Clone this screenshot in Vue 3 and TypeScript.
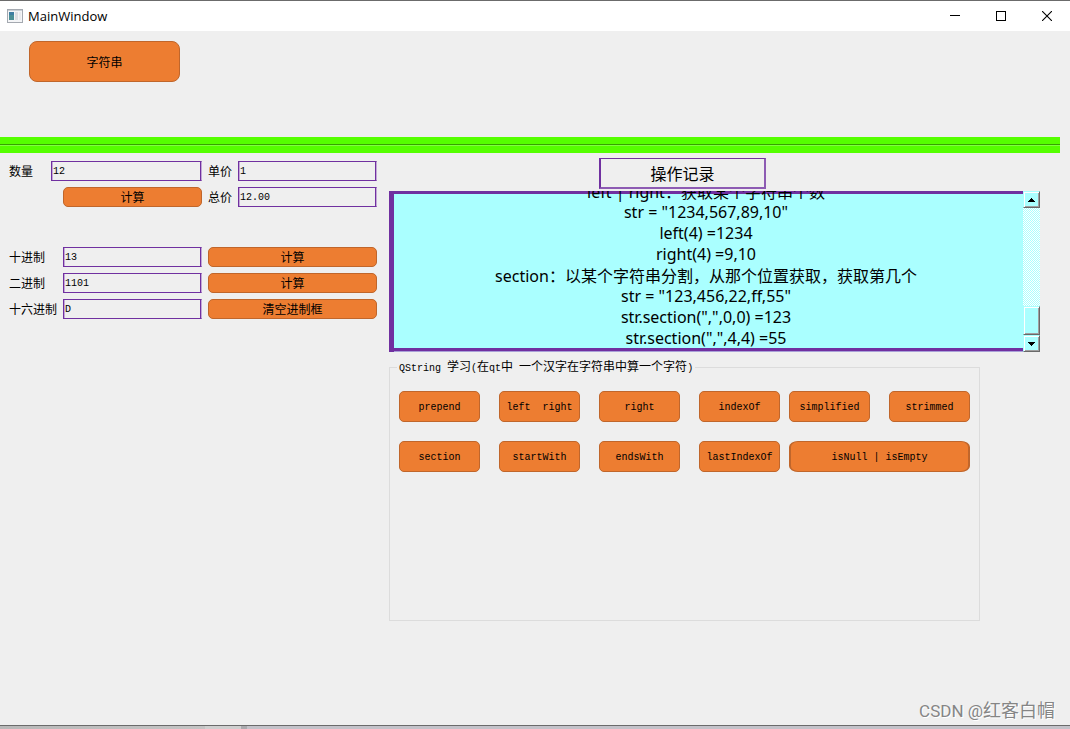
<script setup lang="ts">
import { nextTick, onMounted, ref } from 'vue'

interface Run {
  text: string
  cjk: boolean
}

const quantity = ref('12')
const price = ref('1')
const total = ref('12.00')
const decimal = ref('13')
const binary = ref('1101')
const hex = ref('D')

const lines = ref<string[]>([
  'left | right：获取某个字符串个数',
  'str = "1234,567,89,10"',
  'left(4) =1234',
  'right(4) =9,10',
  'section：以某个字符串分割，从那个位置获取，获取第几个',
  'str = "123,456,22,ff,55"',
  'str.section(",",0,0) =123',
  'str.section(",",4,4) =55',
])

const groupTitle = 'QString 学习(在qt中 一个汉字在字符串中算一个字符)'
const mainActions = ['prepend', 'left  right', 'right', 'indexOf', 'section', 'startWith', 'endsWith', 'lastIndexOf']
const sideActions = ['simplified', 'strimmed', 'isNull | isEmpty']

const log = ref<HTMLElement | null>(null)

// Latin and Chinese runs use different font sizes
function runs(text: string): Run[] {
  const parts = text.match(/[\u2e80-\uffef]+|[^\u2e80-\uffef]+/g) ?? []
  return parts.map((part) => ({ text: part, cjk: /[\u2e80-\uffef]/.test(part) }))
}

function computeTotal(): void {
  total.value = (Number(quantity.value) * Number(price.value)).toFixed(2)
}

function fromDecimal(): void {
  const n = parseInt(decimal.value, 10)
  binary.value = n.toString(2)
  hex.value = n.toString(16).toUpperCase()
}

function fromBinary(): void {
  const n = parseInt(binary.value, 2)
  decimal.value = n.toString(10)
  hex.value = n.toString(16).toUpperCase()
}

function clearBases(): void {
  decimal.value = ''
  binary.value = ''
  hex.value = ''
}

function scrollLog(step: number): void {
  if (log.value) log.value.scrollTop += step
}

function scrollToEnd(): void {
  if (log.value) log.value.scrollTop = log.value.scrollHeight
}

async function record(action: string): Promise<void> {
  lines.value.push(action)
  await nextTick()
  scrollToEnd()
}

onMounted(scrollToEnd)
</script>

<template>
  <div class="window">
    <header class="titlebar">
      <svg class="app-icon" width="16" height="14" viewBox="0 0 16 14" aria-hidden="true">
        <rect x="0.5" y="0.5" width="15" height="13" fill="#f4f5f7" stroke="#a4a9b0" />
        <rect x="1" y="1" width="14" height="1" fill="#c9d0d6" />
        <rect x="2" y="3" width="5" height="8" fill="#4b8f96" />
        <rect x="2" y="3" width="5" height="3" fill="#3e7ea2" />
        <rect x="8" y="3" width="3" height="8" fill="#dcdee2" />
        <rect x="12" y="3" width="2" height="8" fill="#e9ebee" />
      </svg>
      <h1 class="title">MainWindow</h1>
      <div class="controls">
        <button type="button" aria-label="Minimize">
          <svg width="10" height="10" viewBox="0 0 10 10"><path d="M0 4.5H10" stroke="#000" /></svg>
        </button>
        <button type="button" aria-label="Maximize">
          <svg width="10" height="10" viewBox="0 0 10 10"><rect x="0.5" y="0.5" width="9" height="9" fill="none" stroke="#000" /></svg>
        </button>
        <button type="button" aria-label="Close">
          <svg width="10" height="10" viewBox="0 0 10 10"><path d="M0 0L10 10M10 0L0 10" stroke="#000" stroke-width="1.1" /></svg>
        </button>
      </div>
    </header>

    <nav class="toolbar">
      <button type="button" class="btn btn-large">字符串</button>
    </nav>
    <hr class="divider" />

    <main class="body">
      <section class="left">
        <div class="row">
          <div class="half wide">
            <label for="quantity" class="short">数量</label>
            <input id="quantity" v-model="quantity" type="text" />
          </div>
          <div class="half">
            <label for="price" class="mini">单价</label>
            <input id="price" v-model="price" type="text" />
          </div>
        </div>
        <div class="row">
          <div class="half wide indent">
            <button type="button" class="btn" @click="computeTotal">计算</button>
          </div>
          <div class="half">
            <label for="total" class="mini">总价</label>
            <input id="total" v-model="total" type="text" />
          </div>
        </div>
        <div class="row spaced">
          <div class="half wide">
            <label for="decimal">十进制</label>
            <input id="decimal" v-model="decimal" type="text" />
          </div>
          <div class="half">
            <button type="button" class="btn" @click="fromDecimal">计算</button>
          </div>
        </div>
        <div class="row">
          <div class="half wide">
            <label for="binary">二进制</label>
            <input id="binary" v-model="binary" type="text" />
          </div>
          <div class="half">
            <button type="button" class="btn" @click="fromBinary">计算</button>
          </div>
        </div>
        <div class="row">
          <div class="half wide">
            <label for="hex">十六进制</label>
            <input id="hex" v-model="hex" type="text" />
          </div>
          <div class="half">
            <button type="button" class="btn" @click="clearBases">清空进制框</button>
          </div>
        </div>
      </section>

      <section class="right">
        <h2 class="log-title">操作记录</h2>
        <div class="log-box">
          <div ref="log" class="log">
            <p v-for="(line, i) in lines" :key="i">
              <span v-for="(run, j) in runs(line)" :key="j" :class="{ cjk: run.cjk }">{{ run.text }}</span>
            </p>
          </div>
          <div class="scrollbar">
            <button type="button" class="bevel" aria-label="Scroll up" @click="scrollLog(-21)">
              <svg width="7" height="4" viewBox="0 0 7 4" shape-rendering="crispEdges"><path d="M3 0h1v1h1v1h1v1h1v1H0V3h1V2h1V1h1z" /></svg>
            </button>
            <svg class="track" width="17" height="98" shape-rendering="crispEdges" aria-hidden="true">
              <defs>
                <pattern id="dither" width="2" height="2" patternUnits="userSpaceOnUse">
                  <rect width="2" height="2" fill="#aaffff" />
                  <rect width="1" height="1" fill="#ffffff" />
                  <rect x="1" y="1" width="1" height="1" fill="#ffffff" />
                </pattern>
              </defs>
              <rect width="100%" height="100%" fill="url(#dither)" />
            </svg>
            <div class="bevel thumb"></div>
            <button type="button" class="bevel" aria-label="Scroll down" @click="scrollLog(21)">
              <svg width="7" height="4" viewBox="0 0 7 4" shape-rendering="crispEdges"><path d="M0 0h7v1H6v1H5v1H4v1H3V3H2V2H1V1H0z" /></svg>
            </button>
          </div>
        </div>

        <fieldset class="group">
          <legend>
            <span v-for="(run, i) in runs(groupTitle)" :key="i" :class="{ latin: !run.cjk }">{{ run.text }}</span>
          </legend>
          <div class="actions">
            <div class="grid main-grid">
              <button v-for="name in mainActions" :key="name" type="button" class="btn code" @click="record(name)">{{ name }}</button>
            </div>
            <div class="grid side-grid">
              <button v-for="name in sideActions" :key="name" type="button" class="btn code" :class="{ double: name.includes('|') }" @click="record(name)">{{ name }}</button>
            </div>
          </div>
        </fieldset>
      </section>
    </main>
    <div class="watermark"><span>CSDN @</span><span class="cjk">红客白帽</span></div>
  </div>
  <div class="desktop-edge"></div>
</template>

<style>
body {
  background: #c6c6c8;
}

#app {
  display: flex;
  flex-direction: column;
  min-height: 100vh;
}
</style>

<style scoped>
.window {
  position: relative;
  flex: 1;
  display: flex;
  flex-direction: column;
  box-sizing: border-box;
  border-top: 1px solid #6b6b6b;
  border-bottom: 1px solid #6b6b6b;
  background: #efefef;
  color: #000;
  font: 12px/16px "Noto Sans CJK SC", sans-serif;
}

.desktop-edge {
  height: 3px;
  background: linear-gradient(90deg, #b8b8b8 0, #c4c4c4 205px, #cfcfcf 205px, #cfcfcf 241px, #aaaaae 241px, #aaaaae 247px, #c3c2c9 247px);
}

button,
input {
  box-sizing: border-box;
  margin: 0;
  font: inherit;
  color: inherit;
}

.titlebar {
  display: flex;
  align-items: center;
  height: 30px;
  padding-left: 7px;
  background: #fff;
}

.title {
  flex: 1;
  margin: 0 0 0 5px;
  font: 400 13px/16px "Open Sans", sans-serif;
}

.controls {
  display: flex;
}

.controls button {
  display: flex;
  align-items: center;
  justify-content: center;
  width: 46px;
  height: 30px;
  padding: 0;
  border: 0;
  background: none;
}

.toolbar {
  box-sizing: border-box;
  height: 106px;
  padding: 10px 29px 0;
}

.btn {
  flex: 1;
  min-width: 0;
  height: 20px;
  padding: 0;
  border: 1px solid #c0662b;
  border-radius: 5px;
  background: #ed7d31;
  text-align: center;
  white-space: pre;
}

.btn-large {
  width: 151px;
  height: 41px;
  border-radius: 8px;
}

.divider {
  box-sizing: border-box;
  height: 16px;
  margin: 0 10px 0 0;
  border: 0;
  background: linear-gradient(#55ff00 7px, #36a200 7px, #36a200 8px, #80ff40 8px, #80ff40 9px, #55ff00 9px);
}

.body {
  flex: 1;
  display: flex;
  align-items: flex-start;
  gap: 12px;
  padding: 5px 30px 20px 9px;
}

.left {
  display: flex;
  flex-direction: column;
  gap: 6px;
  width: 368px;
  padding-top: 3px;
}

.row {
  display: flex;
  gap: 6px;
}

.spaced {
  margin-top: 34px;
}

.half {
  display: flex;
  align-items: center;
  width: 169px;
}

.wide {
  width: 193px;
}

.indent {
  box-sizing: border-box;
  padding-left: 54px;
}

label {
  width: 54px;
  white-space: nowrap;
}

.short {
  width: 42px;
}

.mini {
  width: 30px;
}

input {
  flex: 1;
  min-width: 0;
  height: 20px;
  padding: 0 1px;
  border: 1px solid #7030a0;
  border-right-color: #c3a8d6;
  border-radius: 0;
  background: transparent;
  box-shadow: inset 1px 0 #c3a8d6, inset -1px 0 #7030a0;
  font-family: "Liberation Mono", monospace;
  font-size: 10px;
  outline: none;
}

.right {
  flex: 1;
  min-width: 0;
}

.log-title {
  box-sizing: border-box;
  width: 167px;
  height: 31px;
  margin: 0 0 2px 210px;
  border: 2px solid #7030a0;
  border-top-width: 1px;
  border-right-color: #8d5bb3;
  border-bottom-color: #8d5bb3;
  font: 400 16px/28px "Noto Sans CJK SC", sans-serif;
  text-align: center;
}

.log-box {
  display: flex;
  height: 161px;
}

.log {
  flex: 1;
  min-width: 0;
  box-sizing: border-box;
  overflow: hidden;
  padding-bottom: 3px;
  background: #aaffff;
  box-shadow: inset 5px 0 #7030a0, inset 0 3px #7030a0, inset 0 -1px #a9a0d8, inset 0 -4px #7030a0;
  font: 16px/21px "Noto Sans", "Noto Sans CJK SC", sans-serif;
  text-align: center;
}

.log p {
  height: 21px;
  margin: 0;
  white-space: pre;
}

.log .cjk {
  font-family: "Noto Sans CJK SC", sans-serif;
}

.scrollbar {
  display: flex;
  flex-direction: column;
  width: 17px;
}

.bevel {
  display: flex;
  align-items: center;
  justify-content: center;
  box-sizing: border-box;
  width: 17px;
  height: 17px;
  padding: 0;
  border: 1px solid #aaffff;
  border-right-color: #696969;
  border-bottom-color: #696969;
  background: #aaffff;
  box-shadow: inset 1px 1px #fff, inset -1px -1px #a0a0a0;
}

.thumb {
  height: 29px;
}

.track {
  display: block;
  flex: 1;
}

.group {
  box-sizing: border-box;
  min-width: 0;
  min-height: 263px;
  margin: 6px 60px 0 0;
  padding: 15px 9px 20px;
  border: 1px solid #dcdcdc;
}

.group legend {
  margin-left: -2px;
  padding: 0 2px;
  line-height: 15px;
  white-space: pre;
}

.latin,
.code {
  font-family: "Liberation Mono", monospace;
  font-size: 10px;
}

.actions {
  display: flex;
  gap: 9px;
}

.grid {
  display: grid;
  gap: 19px;
  min-width: 0;
}

.main-grid {
  flex: 381;
  grid-template-columns: repeat(4, minmax(0, 1fr));
}

.side-grid {
  flex: 181;
  grid-template-columns: repeat(2, minmax(0, 1fr));
}

.code {
  height: 31px;
  padding-top: 2px;
}

.double {
  grid-column: span 2;
  border-right-width: 2px;
  border-left-width: 2px;
  border-radius: 9px / 6px;
}

.watermark {
  position: absolute;
  right: 15px;
  bottom: 2px;
  color: #858585;
  font: 400 17px/24px Roboto, sans-serif;
  text-shadow: 1px 1px #fff;
  white-space: pre;
}

.watermark .cjk {
  font-family: "Noto Sans CJK SC", sans-serif;
  font-size: 18px;
}
</style>
